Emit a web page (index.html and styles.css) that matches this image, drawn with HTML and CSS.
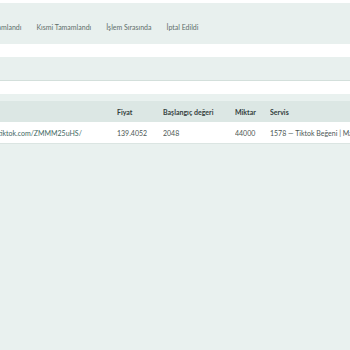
FILE: index.html
```html
<!DOCTYPE html>
<html lang="tr">
<head>
    <meta charset="UTF-8">
    <meta name="viewport" content="width=device-width, initial-scale=1.0">
    <title>Siparişler</title>
    <link rel="stylesheet" href="styles.css">
</head>
<body>
    <div class="page">
        <div class="tabs">
            <a class="tab" href="#">Tümü</a>
            <a class="tab" href="#">Tamamlandı</a>
            <a class="tab" href="#">Kısmi Tamamlandı</a>
            <a class="tab" href="#">İşlem Sırasında</a>
            <a class="tab" href="#">İptal Edildi</a>
        </div>

        <div class="search"></div>

        <div class="orders">
            <div class="row head">
                <div class="cell">Bağlantı</div>
                <div class="cell">Fiyat</div>
                <div class="cell">Başlangıç değeri</div>
                <div class="cell">Miktar</div>
                <div class="cell">Servis</div>
            </div>
            <div class="row">
                <div class="cell link">https://vm.tiktok.com/ZMMM25uHS/</div>
                <div class="cell">139.4052</div>
                <div class="cell">2048</div>
                <div class="cell">44000</div>
                <div class="cell">1578 — Tiktok Beğeni | Maksimum 100K</div>
            </div>
        </div>
    </div>
</body>
</html>
```

FILE: styles.css
```css
html, body {
    margin: 0;
    overflow: hidden;
}

body {
    font-family: Lato, "Open Sans", sans-serif;
    font-size: 7px;
    background-color: #fff;
    height: 350px;
}

.page {
    margin-left: -80px;
    width: 600px;
    padding-top: 3px;
}

.tabs {
    display: flex;
    align-items: center;
    gap: 15px;
    height: 41px;
    box-sizing: border-box;
    padding: 6px 0 0 33px;
    background-color: #e8f0ee;
}

.tab {
    color: #5f6f6b;
    text-decoration: none;
}

.search {
    height: 23px;
    margin-top: 13px;
    background-color: #e8f0ee;
    border-bottom: 1px solid #d3dfdb;
}

.orders {
    margin-top: 13px;
    padding-top: 7px;
    background-color: #e9f1ef;
    height: 300px;
}

.row {
    display: grid;
    grid-template-columns: 197px 46px 72px 35px 1fr;
    align-items: center;
    height: 21px;
    background-color: #fff;
    color: #4c5754;
    border-bottom: 1px solid #dbe5e2;
}

.row.head {
    background-color: #dce7e4;
    color: #34403d;
    font-weight: bold;
    border-bottom: none;
}

.cell {
    white-space: nowrap;
    overflow: hidden;
}

.link {
    padding-left: 45px;
    color: #41675f;
}
```
